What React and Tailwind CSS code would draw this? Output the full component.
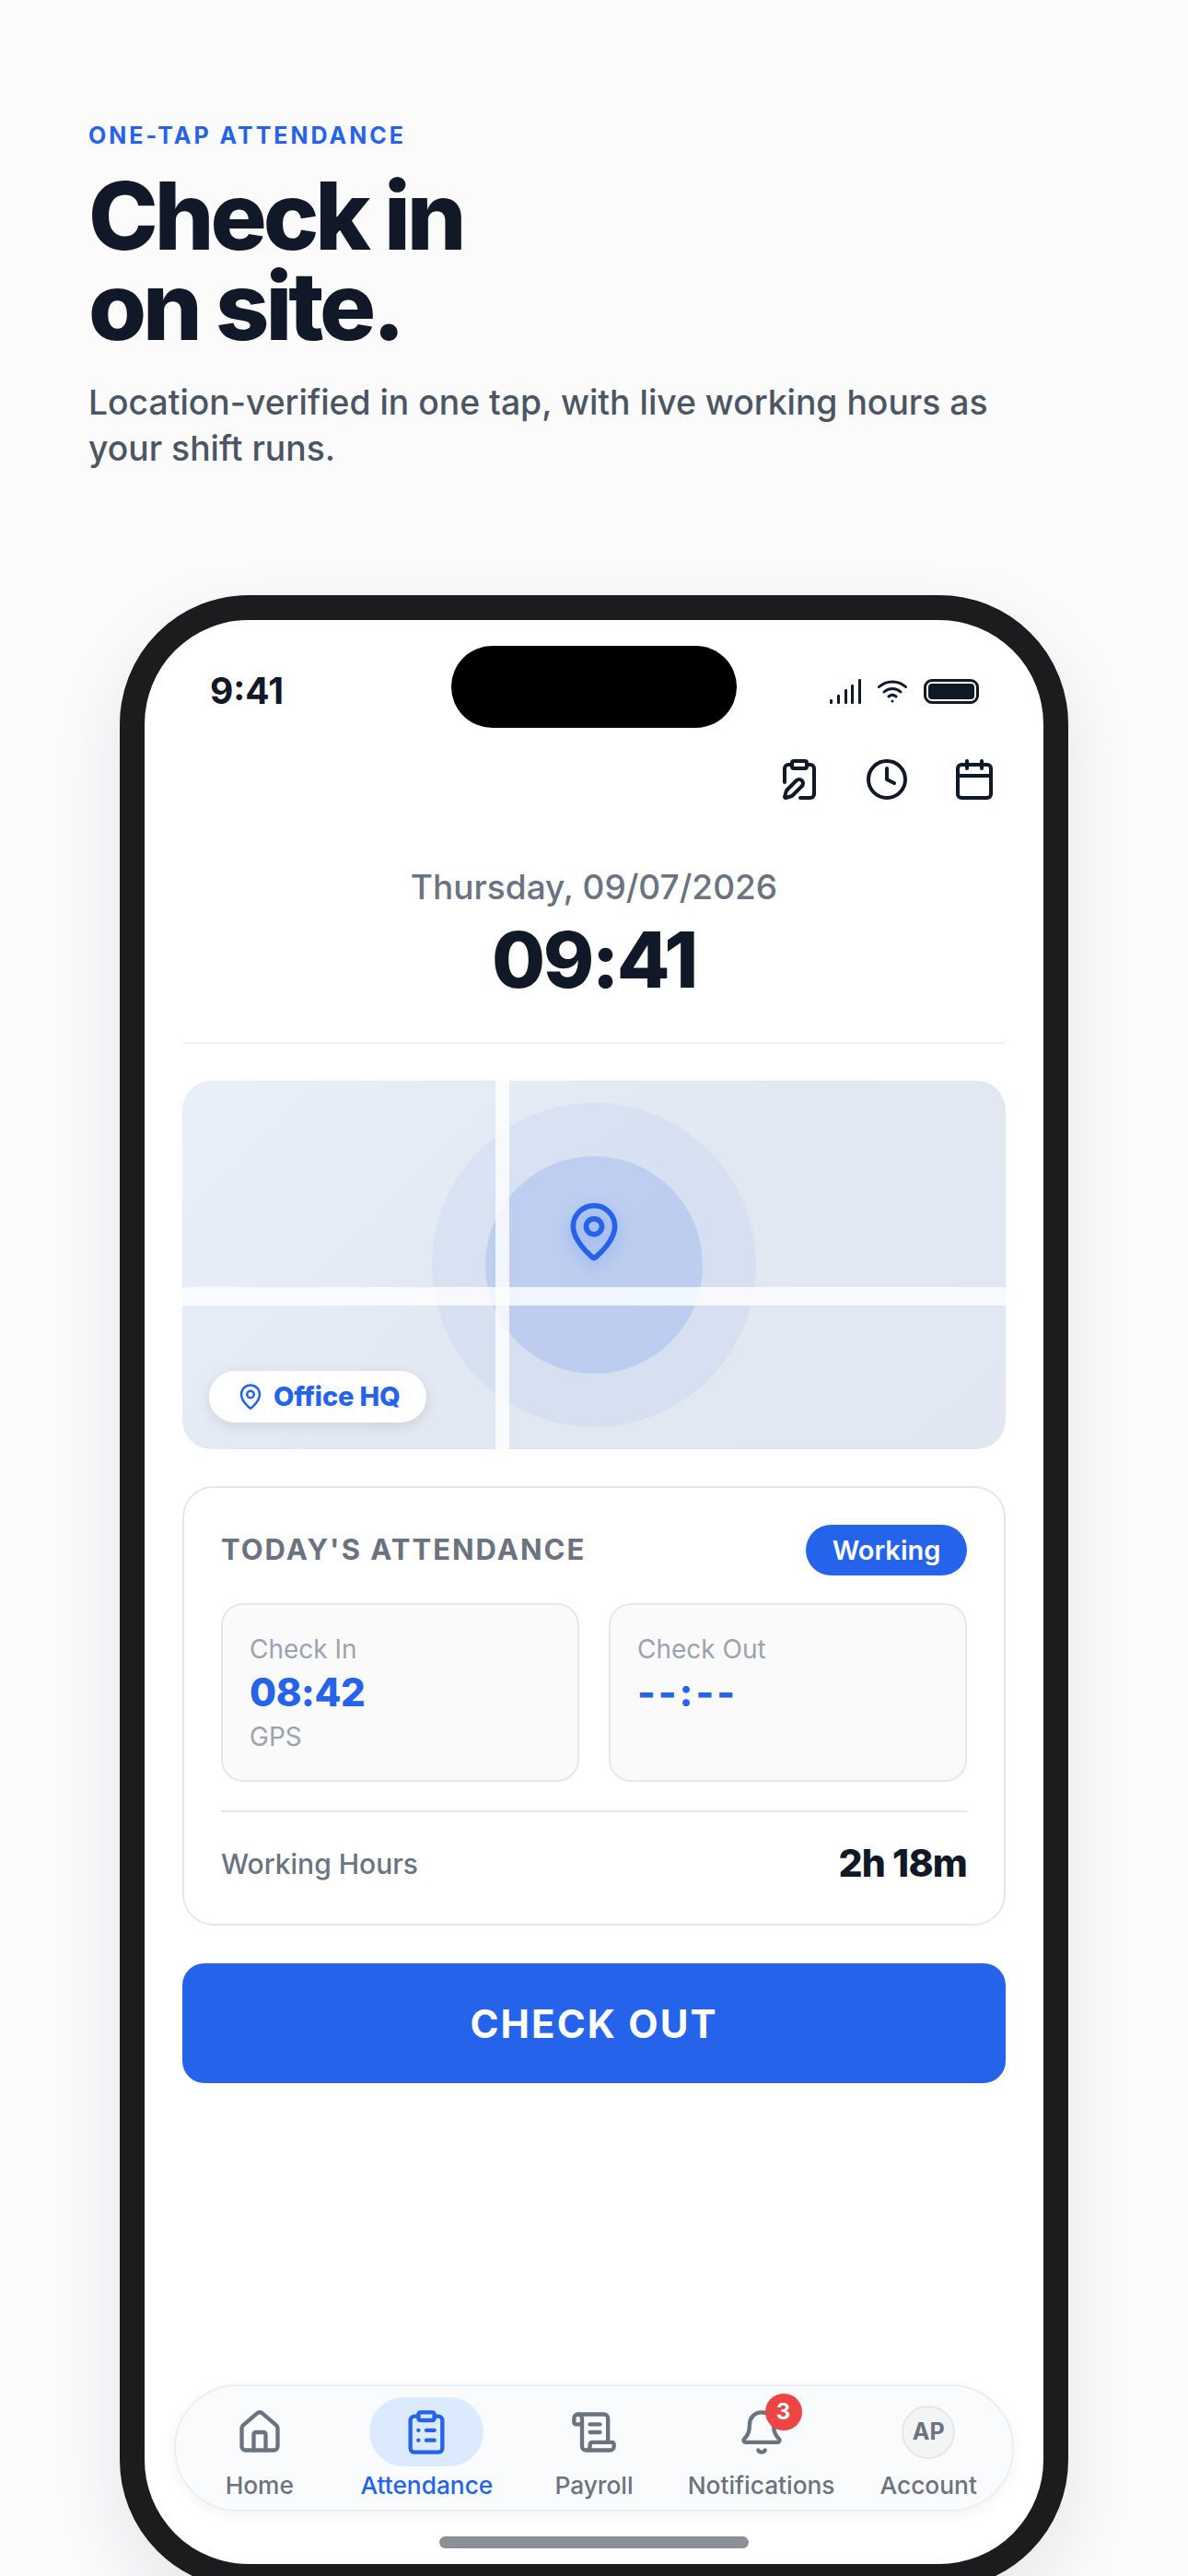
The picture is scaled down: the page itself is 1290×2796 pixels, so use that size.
import { ClipboardPen, Clock, Calendar, MapPin, House, ClipboardList, ScrollText, Bell } from 'lucide-react'

function StatusIcons() {
  return (
    <div className="flex items-center gap-[18px] pr-[70px]">
      <svg width="34" height="27" viewBox="0 0 34 27" fill="#111827">
        <rect x="0" y="22" width="3" height="5" rx="1" />
        <rect x="8" y="17" width="3" height="10" rx="1" />
        <rect x="16" y="11" width="3" height="16" rx="1" />
        <rect x="23" y="6" width="3" height="21" rx="1" />
        <rect x="31" y="0" width="3" height="27" rx="1" />
      </svg>
      <svg width="32" height="26" viewBox="0 0 32 26" fill="none" stroke="#111827" strokeWidth="3" strokeLinecap="round">
        <path d="M1.5 8.5C9.5 1 22.5 1 30.5 8.5" />
        <path d="M7 14c5.200-4.600 12.800-4.600 18 0" />
        <path d="M12 19c2.400-2 5.600-2 8 0" />
        <circle cx="16" cy="24" r="1.500" fill="#111827" stroke="none" />
      </svg>
      <div className="flex h-[27px] w-[60px] items-center rounded-[9px] border-[3px] border-[#111827] p-[2px]">
        <div className="h-full w-full rounded-[4px] bg-[#111827]" />
      </div>
    </div>
  )
}

function NavItem({ label, active, children }) {
  return (
    <div className="flex flex-col items-center">
      <div className={`flex h-[75px] w-[124px] items-center justify-center rounded-full ${active ? 'bg-[#dbeafe]' : ''}`}>
        {children}
      </div>
      <span className={`mt-[3px] whitespace-nowrap text-[26.3px] leading-[36px] font-medium ${active ? 'text-[#2563eb]' : 'text-[#6b7280]'}`}>{label}</span>
    </div>
  )
}

function TimeBox({ label, value, sub, spaced }) {
  return (
    <div className="h-[194px] rounded-[24px] border-2 border-[#e5e7eb] bg-[#fafafb] px-[29px] pt-[28px]">
      <div className="text-[28px] leading-[40px] text-[#9ca3af]">{label}</div>
      <div className={`mt-[1px] text-[42px] leading-[52px] font-extrabold text-[#2563eb] ${spaced ? 'tracking-[3px]' : 'tracking-[-0.01em]'}`}>{value}</div>
      {sub && <div className="mt-[2px] text-[28px] leading-[40px] text-[#9ca3af]">{sub}</div>}
    </div>
  )
}

export default function App() {
  return (
    <div className="h-[2796px] overflow-hidden bg-[#fbfbfc] [font-family:Inter,sans-serif]">
      <div className="px-[96px] pt-[130px]">
        <div className="text-[25px] leading-[34px] font-bold tracking-[0.12em] text-[#2563eb]">ONE-TAP ATTENDANCE</div>
        <h1 className="mt-[21px] text-[102px] leading-[98px] font-extrabold tracking-[-0.04em] text-[#111827]">
          Check in<br />on site.
        </h1>
        <p className="mt-[31px] w-[1000px] text-[37.3px] leading-[50px] font-medium text-[#4b5563]">
          Location-verified in one tap, with live working hours as your shift runs.
        </p>
      </div>

      <div className="mx-auto mt-[134px] w-[1030px] rounded-[140px] border-[27px] border-[#1c1c1e] bg-white shadow-[0_30px_80px_rgba(17,24,39,0.09)]">
        <div className="relative flex h-[2110px] flex-col">
          <div className="absolute left-[333px] top-[28px] h-[89px] w-[310px] rounded-full bg-black" />

          <div className="flex items-center justify-between pl-[71px] pt-[49px]">
            <span className="text-[39px] leading-[56px] font-bold text-[#111827]">9:41</span>
            <StatusIcons />
          </div>

          <div className="mt-[44px] flex justify-end gap-[47px] pr-[51px] text-[#111827]">
            <ClipboardPen size={48} />
            <Clock size={48} />
            <Calendar size={48} />
          </div>

          <div className="mt-[68px] text-center text-[37px] leading-[50px] font-medium text-[#6b7280]">Thursday, 09/07/2026</div>
          <div className="mt-[8px] text-center text-[84px] leading-[92px] font-extrabold tracking-[-0.03em] text-[#111827]">09:41</div>

          <div className="mx-[41px] mt-[43px] flex flex-col">
            <div className="h-[2px] bg-[#f0f1f3]" />

            <div className="relative mt-[40px] h-[400px] overflow-hidden rounded-[32px] bg-[linear-gradient(135deg,#e8eff8,#e2e8f1,#e0e7f3)]">
              <div className="absolute left-[271px] top-[24px] h-[352px] w-[352px] rounded-full bg-[#2563eb]/[0.06]" />
              <div className="absolute left-[329px] top-[82px] h-[236px] w-[236px] rounded-full bg-[#2563eb]/15" />
              <div className="absolute left-[340px] top-0 h-full w-[15px] bg-white/80" />
              <div className="absolute left-0 top-[224px] h-[20px] w-full bg-white/80" />
              <MapPin size={68} className="absolute left-[413px] top-[130px] text-[#2563eb] drop-shadow-[0_6px_8px_rgba(37,99,235,0.3)]" />
              <div className="absolute bottom-[29px] left-[29px] flex h-[56px] w-[236px] items-center gap-[10px] rounded-full bg-white pl-[30px] shadow-[0_4px_14px_rgba(17,24,39,0.1)]">
                <MapPin size={30} className="text-[#2563eb]" />
                <span className="text-[29px] font-extrabold tracking-[-0.005em] text-[#2563eb]">Office HQ</span>
              </div>
            </div>

            <div className="mt-[40px] rounded-[34px] border-2 border-[#e5e7eb] p-[40px]">
              <div className="flex items-center justify-between">
                <span className="text-[31px] font-bold tracking-[0.065em] text-[#6b7280]">TODAY'S ATTENDANCE</span>
                <span className="flex h-[55px] w-[175px] items-center justify-center rounded-full bg-[#2563eb] text-[29px] font-semibold text-white">Working</span>
              </div>
              <div className="mt-[30px] grid grid-cols-2 gap-[32px]">
                <TimeBox label="Check In" value="08:42" sub="GPS" />
                <TimeBox label="Check Out" value="--:--" spaced />
              </div>
              <div className="mt-[31px] h-[2px] bg-[#e5e7eb]" />
              <div className="mt-[31px] flex h-[50px] items-center justify-between">
                <span className="text-[30px] font-medium text-[#6b7280]">Working Hours</span>
                <span className="text-[41px] font-extrabold tracking-[-0.02em] text-[#111827]">2h 18m</span>
              </div>
            </div>

            <div className="mt-[41px] flex h-[130px] items-center justify-center rounded-[24px] bg-[#2563eb] text-[42px] font-bold tracking-[0.05em] text-white">
              CHECK OUT
            </div>
          </div>

          <div className="mx-[32px] mt-auto grid h-[138px] grid-cols-5 rounded-full border-2 border-[#eceef0] bg-[#fafbfc] pt-[12px] shadow-[0_4px_16px_rgba(17,24,39,0.05)]">
            <NavItem label="Home"><House size={52} className="text-[#6b7280]" /></NavItem>
            <NavItem label="Attendance" active><ClipboardList size={52} className="text-[#2563eb]" /></NavItem>
            <NavItem label="Payroll"><ScrollText size={52} className="text-[#6b7280]" /></NavItem>
            <NavItem label="Notifications">
              <div className="relative">
                <Bell size={52} className="text-[#6b7280]" />
                <span className="absolute left-[30px] top-[-16px] flex h-[40px] w-[40px] items-center justify-center rounded-full bg-[#ef4444] text-[24px] font-bold text-white">3</span>
              </div>
            </NavItem>
            <NavItem label="Account">
              <span className="flex h-[58px] w-[58px] items-center justify-center rounded-full border-2 border-[#e5e7eb] bg-[#f3f4f6] text-[25px] font-bold text-[#6b7280]">AP</span>
            </NavItem>
          </div>

          <div className="mx-auto mb-[17px] mt-[27px] h-[13px] w-[336px] rounded-full bg-[#8a8f98]" />
        </div>
      </div>
    </div>
  )
}
